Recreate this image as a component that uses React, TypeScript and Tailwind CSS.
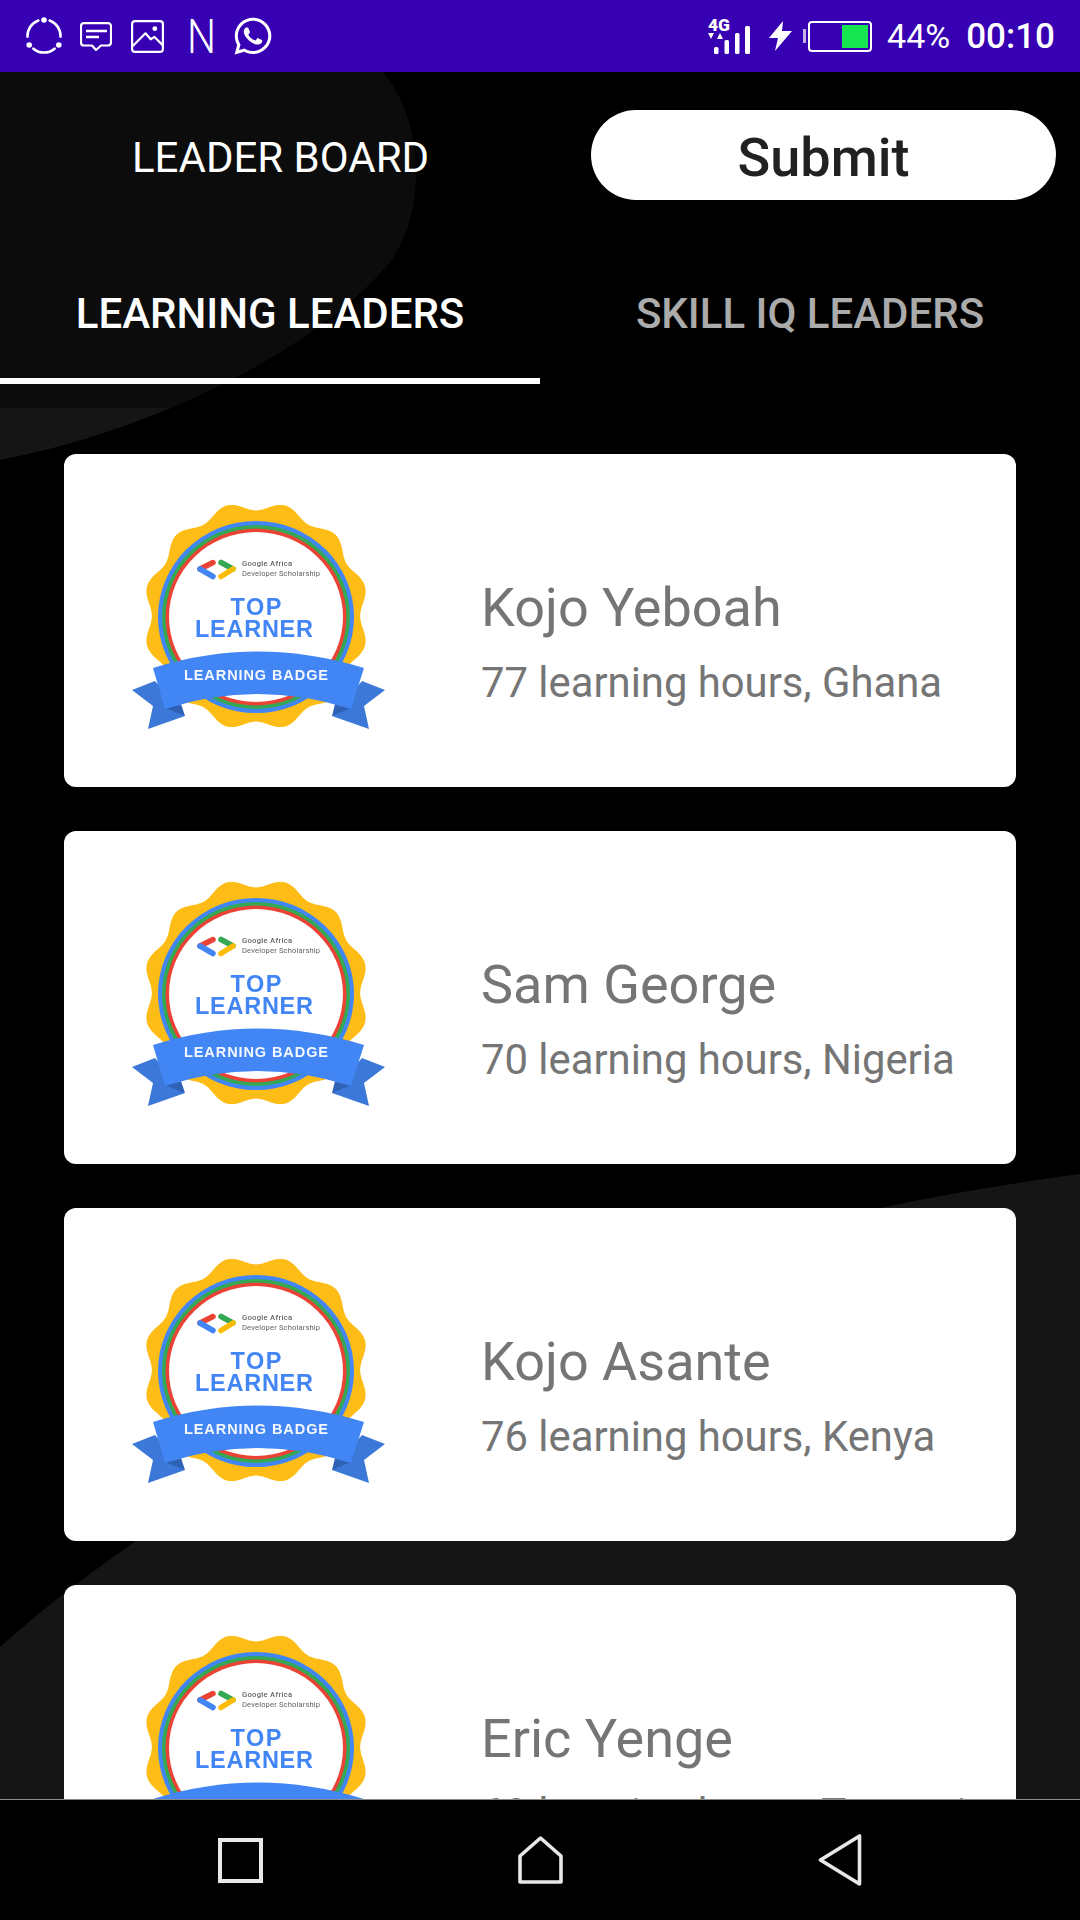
import { FaWhatsapp } from "react-icons/fa";

const leaders = [
  { name: "Kojo Yeboah", info: "77 learning hours, Ghana" },
  { name: "Sam George", info: "70 learning hours, Nigeria" },
  { name: "Kojo Asante", info: "76 learning hours, Kenya" },
  { name: "Eric Yenge", info: "68 learning hours, Tanzania" },
];

function scallopPath() {
  const cx = 146;
  const cy = 127;
  const pts: string[] = [];
  for (let i = 0; i <= 360; i++) {
    const t = (i / 180) * Math.PI;
    const k = 1 + 0.04 * Math.cos(12 * t - Math.PI);
    const x = cx + 108.5 * k * Math.sin(t);
    const y = cy - 110 * k * Math.cos(t);
    pts.push(`${i === 0 ? "M" : "L"}${x.toFixed(1)} ${y.toFixed(1)}`);
  }
  return pts.join(" ") + "Z";
}
const scallop = scallopPath();

function Badge() {
  return (
    <svg width="290" height="250" viewBox="0 0 290 250" className="shrink-0 blur-[0.5px]">
      <path d={scallop} fill="#fdbd16" />
      <ellipse cx="146" cy="128" rx="98" ry="96" fill="#4285f4" />
      <ellipse cx="146" cy="128" rx="94" ry="92" fill="#34a853" />
      <ellipse cx="146" cy="128" rx="90.5" ry="88.5" fill="#ea4335" />
      <ellipse cx="146" cy="128" rx="87" ry="85" fill="#ffffff" />
      <g strokeWidth="5.5" strokeLinecap="round" fill="none">
        <path d="M103 73.5 L90 80" stroke="#ea4335" />
        <path d="M90 80 L103 87.5" stroke="#4285f4" />
        <path d="M111 73.5 L123 80" stroke="#34a853" />
        <path d="M123 80 L111 87.5" stroke="#fbbc04" />
      </g>
      <g fontFamily="'Roboto', sans-serif" fontSize="7.6" fill="#5f6368">
        <text x="132" y="77" textLength="50" fontWeight="500">Google Africa</text>
        <text x="132" y="87" textLength="78">Developer Scholarship</text>
      </g>
      <g fontFamily="'Liberation Sans', sans-serif" fontWeight="700" fill="#4285f4" fontSize="23.5">
        <text x="120.5" y="126" textLength="51">TOP</text>
        <text x="85" y="148" textLength="118">LEARNER</text>
      </g>
      <path d="M22 201 L45 192 L75 227 L38 240 L43 217Z" fill="#3b78d8" />
      <path d="M275 201 L252 192 L222 227 L259 240 L254 217Z" fill="#3b78d8" />
      <path d="M55 219 L71 215 L75 227Z" fill="#2f62b5" />
      <path d="M241 219 L225 215 L222 227Z" fill="#2f62b5" />
      <path d="M43 179 Q147 146 254 179 L241 220 Q147 190 55 220Z" fill="#4285f4" />
      <text
        x="74"
        y="191"
        textLength="144"
        fontFamily="'Liberation Sans', sans-serif"
        fontWeight="700"
        fontSize="14.5"
        fill="#f4f8ff"
      >
        LEARNING BADGE
      </text>
    </svg>
  );
}

function LeaderCard({ name, info }: { name: string; info: string }) {
  return (
    <div className="flex h-[333px] shrink-0 items-center rounded-[12px] bg-white pl-[46px] text-[#757575]">
      <div className="mt-[-13px]">
        <Badge />
      </div>
      <div className="ml-[81px] mt-[42px] flex flex-col">
        <div className="whitespace-nowrap text-[54px] leading-[72px]">{name}</div>
        <div className="mt-[11px] whitespace-nowrap text-[41.8px] leading-[56px]">{info}</div>
      </div>
    </div>
  );
}

function arc(a0: number, a1: number) {
  const p = (a: number) => {
    const r = (a * Math.PI) / 180;
    return `${(18 + 16.5 * Math.cos(r)).toFixed(2)} ${(19 - 16.5 * Math.sin(r)).toFixed(2)}`;
  };
  return `M${p(a0)} A16.5 16.5 0 0 ${a0 > a1 ? 1 : 0} ${p(a1)}`;
}

function StatusLeft() {
  return (
    <div className="flex items-center pl-[26px]">
      <svg width="36" height="38" viewBox="0 0 36 38" fill="none" stroke="#fff" strokeWidth="2.6" strokeLinecap="round">
        <path d={arc(70, -2)} />
        <path d={arc(-50, -130)} />
        <path d={arc(182, 110)} />
        <circle cx="18" cy="3" r="2.8" fill="#fff" stroke="none" />
        <circle cx="3.2" cy="28" r="2.8" fill="#fff" stroke="none" />
        <circle cx="32.8" cy="28" r="2.8" fill="#fff" stroke="none" />
      </svg>
      <svg className="ml-[18px]" width="32" height="29" viewBox="0 0 32 29" fill="none" stroke="#fff" strokeWidth="2.2" strokeLinejoin="round">
        <path d="M4 1.2H28A3 3 0 0 1 31 4.2V20.5A3 3 0 0 1 28 23.5H21L16 28L12 23.5H4A3 3 0 0 1 1 20.5V4.2A3 3 0 0 1 4 1.2Z" />
        <path d="M6 9H27M6 15H19" strokeWidth="2.6" />
      </svg>
      <svg className="ml-[19px]" width="33" height="33" viewBox="0 0 33 33" fill="none" stroke="#fff" strokeWidth="2.2" strokeLinejoin="round">
        <rect x="1.1" y="1.1" width="30.8" height="30.8" rx="3" />
        <path d="M1.8 26L14.5 13.3L19.7 19.3L23.5 17L32 25.5" />
        <circle cx="23.8" cy="8.7" r="2.4" fill="#fff" stroke="none" />
      </svg>
      <svg className="ml-[23px]" width="29" height="38" viewBox="0 0 29 38">
        <text x="0" y="36" textLength="29" lengthAdjust="spacingAndGlyphs" fontFamily="'Roboto', sans-serif" fontWeight="300" fontSize="48" fill="#fff">
          N
        </text>
      </svg>
      <FaWhatsapp className="ml-[16px] text-white" size={42} />
    </div>
  );
}

function StatusRight() {
  return (
    <div className="flex items-center pr-[25px] text-white">
      <svg width="42" height="38" viewBox="0 0 42 38" fill="#fff">
        <text x="0" y="14" textLength="22" lengthAdjust="spacingAndGlyphs" fontFamily="'Roboto', sans-serif" fontWeight="900" fontSize="16">
          4G
        </text>
        <path d="M0 16L6 16L3 22Z" />
        <path d="M9 22L15 22L12 16Z" />
        <rect x="6" y="30" width="4.5" height="7" rx="1.5" />
        <rect x="16.5" y="23" width="4.5" height="14" rx="1.5" />
        <rect x="27" y="16" width="4.5" height="21" rx="1.5" />
        <rect x="37" y="9" width="5" height="28" rx="1.5" />
      </svg>
      <svg className="ml-[19px]" width="23" height="30" viewBox="0 0 23 30" fill="#fff">
        <path d="M14 0L0 17H9L6 30L23 10H13Z" />
      </svg>
      <div className="ml-[11px] flex items-center">
        <div className="h-[14px] w-[3px] bg-white/70" />
        <div className="ml-[2px] flex h-[31px] w-[64px] items-center justify-end rounded-[4px] border-[2.5px] border-white pr-[2px]">
          <div className="h-[23px] w-[26px] bg-[#16e552]" />
        </div>
      </div>
      <span className="ml-[15px] text-[34px] leading-none">44%</span>
      <span className="ml-[16px] text-[35px] font-medium leading-none">00:10</span>
    </div>
  );
}

export default function App() {
  return (
    <div className="flex h-[1920px] w-[1080px] flex-col overflow-hidden bg-black font-['Roboto',sans-serif]">
      <div className="flex h-[72px] shrink-0 items-center justify-between bg-[#3700b3]">
        <StatusLeft />
        <StatusRight />
      </div>

      <main className="relative flex min-h-0 flex-1 flex-col overflow-hidden">
        <svg className="absolute left-0 top-0" width="1080" height="1728" viewBox="0 0 1080 1728">
          <path d="M0 0H383C408 30 416 70 416 98C416 140 405 175 383 198C320 270 170 355 0 388Z" fill="#151515" />
          <path d="M0 1575C150 1440 500 1218 885 1135C950 1121 1020 1110 1080 1102V1728H0Z" fill="#151515" />
        </svg>
        <div className="absolute left-0 top-0 h-[336px] w-full bg-black/40" />

        <div className="relative flex h-[128px] shrink-0 items-end">
          <div className="flex h-[90px] w-[591px] items-center justify-start pl-[132px] pt-[4px] text-[42px] text-white">
            LEADER BOARD
          </div>
          <button className="h-[90px] w-[465px] rounded-full bg-white pt-[4px] text-[54px] font-medium text-[#212121]">
            Submit
          </button>
        </div>

        <div className="relative grid h-[184px] shrink-0 grid-cols-2">
          <div className="flex items-center justify-center border-b-[6px] border-white pt-[48px] text-[42px] font-medium text-white">
            LEARNING LEADERS
          </div>
          <div className="flex items-center justify-center pb-[6px] pt-[48px] text-[42px] font-medium text-[#ababab]">
            SKILL IQ LEADERS
          </div>
        </div>

        <div className="relative flex flex-col gap-[44px] px-[64px] pt-[70px]">
          {leaders.map((l) => (
            <LeaderCard key={l.name} name={l.name} info={l.info} />
          ))}
        </div>
      </main>

      <nav className="flex h-[121px] shrink-0 items-center justify-center border-t border-[#8a8a8a] bg-black">
        <div className="flex w-[300px] justify-center">
          <svg width="45" height="46" viewBox="0 0 45 46" fill="none" stroke="#e8e8e8" strokeWidth="4">
            <rect x="2" y="3" width="41" height="41" />
          </svg>
        </div>
        <div className="flex w-[300px] justify-center">
          <svg width="45" height="48" viewBox="0 0 45 48" fill="none" stroke="#e8e8e8" strokeWidth="3.6" strokeLinejoin="round">
            <path d="M2 46V20L22.5 2L43 20V46Z" />
          </svg>
        </div>
        <div className="flex w-[300px] justify-center">
          <svg width="44" height="52" viewBox="0 0 44 52" fill="none" stroke="#e8e8e8" strokeWidth="3.6" strokeLinejoin="round">
            <path d="M41.5 2V50L2.5 26Z" />
          </svg>
        </div>
      </nav>
    </div>
  );
}
